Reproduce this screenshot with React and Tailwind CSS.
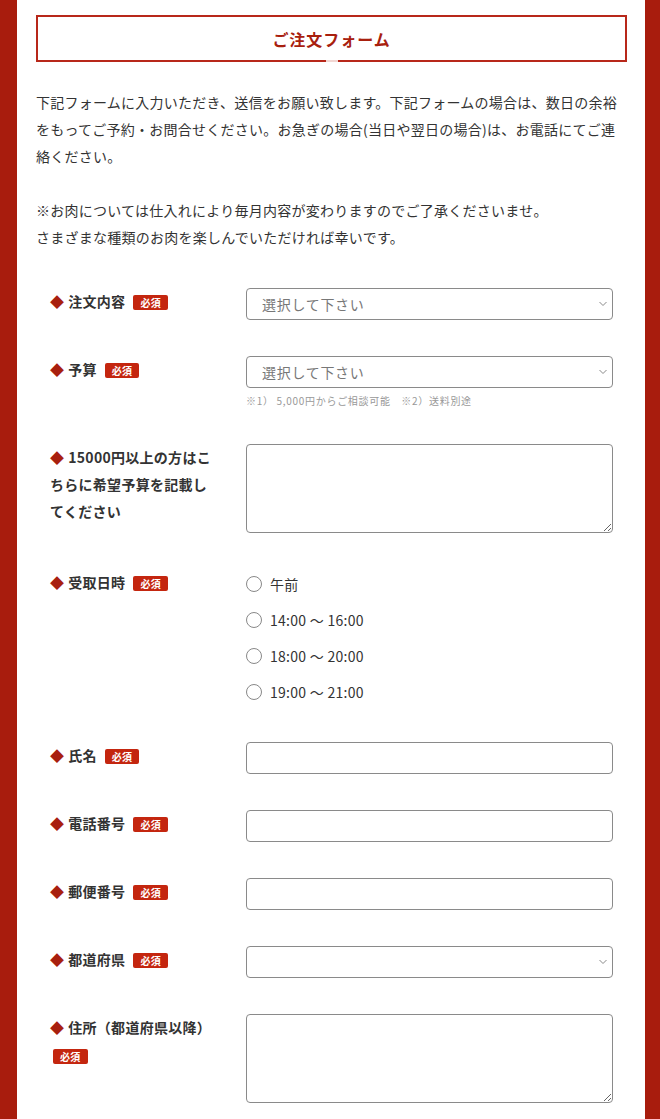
import { useState } from 'react';

const font = { fontFamily: '"Noto Sans CJK JP", "Noto Sans", sans-serif' };

const Badge = ({ className = '' }) => (
  <span className={`inline-block align-middle rounded-[2px] bg-[#c4260f] px-[7px] text-[10px] font-bold leading-[15px] text-white ${className}`}>
    必須
  </span>
);

const Label = ({ children, required, badgeBlock }) => (
  <div className="w-[165px] text-[14px] font-bold leading-[27px] tracking-[0.02em] text-[#333]">
    <span className="mr-[4px] text-[#a8200e]">◆</span>
    {children}
    {required && !badgeBlock && <Badge className="ml-[8px] -mt-[2px]" />}
    {required && badgeBlock && (
      <div className="leading-[27px]">
        <Badge className="ml-[3px]" />
      </div>
    )}
  </div>
);

const Chevron = () => (
  <svg className="pointer-events-none absolute right-[6px] top-1/2 -translate-y-1/2" width="8" height="5" viewBox="0 0 8 5" fill="none">
    <path d="M0.5 0.5L4 4L7.5 0.5" stroke="#888" strokeWidth="1" />
  </svg>
);

const Select = ({ placeholder }) => (
  <div className="relative">
    <select
      defaultValue=""
      className="block h-[32px] w-full appearance-none rounded-[4px] border border-[#8a8a8a] bg-white pl-[15px] text-[14px] tracking-[0.05em] text-[#777] outline-none"
    >
      <option value="">{placeholder}</option>
    </select>
    <Chevron />
  </div>
);

const Input = () => (
  <input type="text" className="block h-[32px] w-full rounded-[4px] border border-[#8a8a8a] bg-white px-[10px] text-[14px] outline-none" />
);

const TextArea = () => (
  <textarea className="block h-[89px] w-full rounded-[4px] border border-[#8a8a8a] bg-white px-[10px] text-[14px] outline-none" />
);

const Row = ({ label, children }) => (
  <div className="grid grid-cols-[196px_1fr] items-start">
    {label}
    <div>{children}</div>
  </div>
);

const times = ['午前', '14:00 〜 16:00', '18:00 〜 20:00', '19:00 〜 21:00'];

export default function App() {
  const [time, setTime] = useState(null);

  return (
    <div className="min-h-screen bg-[#a81c0d] pl-[17px] pr-[15px]" style={font}>
      <div className="min-h-screen bg-white pl-[19px] pr-[18px] pt-[15px] pb-[40px]">
        <div className="relative flex h-[47px] items-center justify-center border-2 border-[#b8281a]">
          <h1 className="text-[16px] font-bold tracking-[0.06em] text-[#a8200e]">ご注文フォーム</h1>
          <span className="absolute -bottom-[2px] left-1/2 h-[2px] w-[12px] -translate-x-1/2 bg-[#f2d6d2]" />
        </div>

        <div className="mt-[27px] text-[14px] leading-[27px] tracking-[0.018em] text-[#333]">
          <p>
            下記フォームに入力いただき、送信をお願い致します。下記フォームの場合は、数日の余裕をもってご予約・お問合せください。お急ぎの場合(当日や翌日の場合)は、お電話にてご連絡ください。
          </p>
          <p className="mt-[27px]">
            ※お肉については仕入れにより毎月内容が変わりますのでご了承くださいませ。
            <br />
            さまざまな種類のお肉を楽しんでいただければ幸いです。
          </p>
        </div>

        <form className="mt-[37px] flex flex-col gap-[36px] px-[14px]" onSubmit={(e) => e.preventDefault()}>
          <Row label={<Label required>注文内容</Label>}>
            <Select placeholder="選択して下さい" />
          </Row>

          <Row label={<Label required>予算</Label>}>
            <Select placeholder="選択して下さい" />
            <p className="mt-[6px] text-[10px] leading-[14px] tracking-[0.07em] text-[#999]">※1） 5,000円からご相談可能　※2）送料別途</p>
          </Row>

          <Row label={<Label>15000円以上の方はこちらに希望予算を記載してください</Label>}>
            <TextArea />
          </Row>

          <Row label={<Label required>受取日時</Label>}>
            <div className="flex flex-col gap-[8px] pt-[1px]">
              {times.map((t, i) => (
                <label key={t} className="flex h-[28px] cursor-pointer items-center gap-[8px] text-[14px] tracking-[0.02em] text-[#333]">
                  <input
                    type="radio"
                    name="time"
                    checked={time === i}
                    onChange={() => setTime(i)}
                    className="sr-only"
                  />
                  <span className="flex h-[16px] w-[16px] items-center justify-center rounded-full border-[1.5px] border-[#888] bg-white">
                    {time === i && <span className="h-[8px] w-[8px] rounded-full bg-[#555]" />}
                  </span>
                  <span>{t}</span>
                </label>
              ))}
            </div>
          </Row>

          <Row label={<Label required>氏名</Label>}>
            <Input />
          </Row>

          <Row label={<Label required>電話番号</Label>}>
            <Input />
          </Row>

          <Row label={<Label required>郵便番号</Label>}>
            <Input />
          </Row>

          <Row label={<Label required>都道府県</Label>}>
            <Select placeholder="" />
          </Row>

          <Row label={<Label required badgeBlock>住所（都道府県以降）</Label>}>
            <TextArea />
          </Row>
        </form>
      </div>
    </div>
  );
}
